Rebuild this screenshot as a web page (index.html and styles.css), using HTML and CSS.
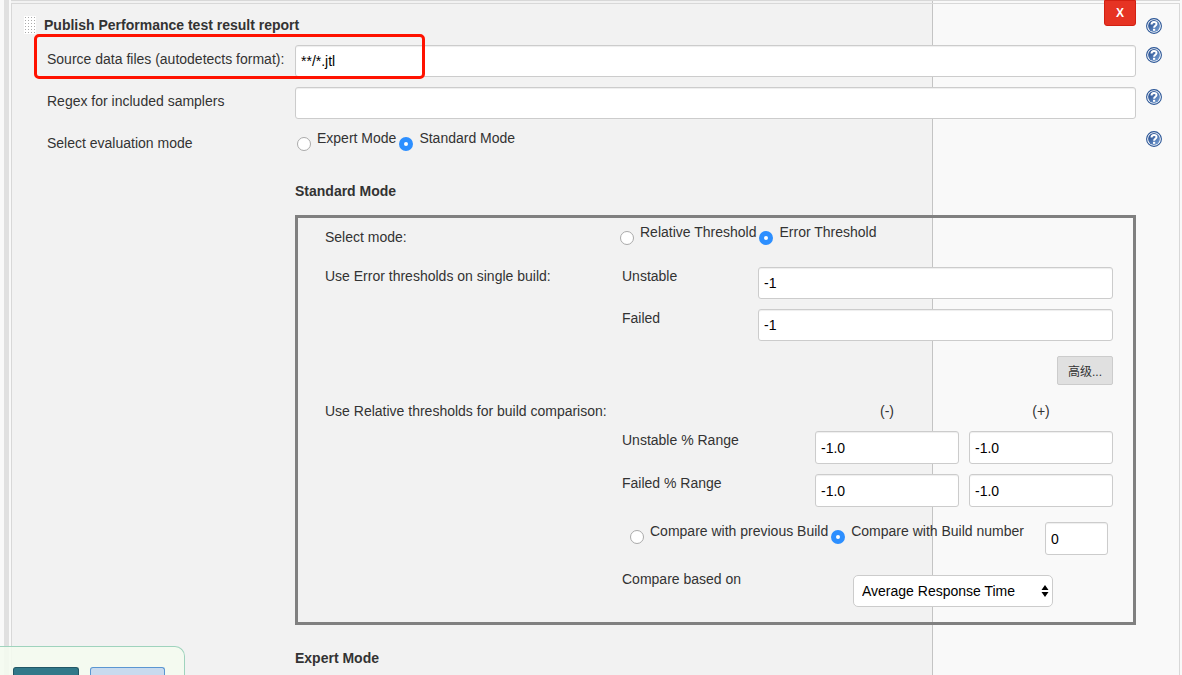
FILE: index.html
```html
<!DOCTYPE html>
<html lang="en">
<head>
  <meta charset="UTF-8">
  <title>Publish Performance test result report</title>
  <link rel="stylesheet" href="styles.css">
</head>
<body>
  <!-- shared help icon -->
  <svg class="defs" width="0" height="0" aria-hidden="true">
    <linearGradient id="help-fill" x1="0" y1="0" x2="1" y2="1">
      <stop offset="0" stop-color="#1d4488"/>
      <stop offset="1" stop-color="#7ba3d6"/>
    </linearGradient>
    <symbol id="help-icon" viewBox="0 0 16 16">
      <circle cx="8" cy="8" r="7.4" fill="#fff" stroke="#2a5596" stroke-width="1.1"/>
      <circle cx="8" cy="8" r="5.9" fill="url(#help-fill)"/>
      <path d="M5.5 6.4C5.5 3.2 10.5 3.2 10.5 6C10.5 7.8 8.1 7.7 8.1 9.8" fill="none" stroke="#fff" stroke-width="2"/>
      <rect x="7" y="10.8" width="2.2" height="2" fill="#fff"/>
    </symbol>
  </svg>

  <div class="page">
    <form class="panel">
      <div class="title-row">
        <span class="handle"></span>
        <h2 class="title">Publish Performance test result report</h2>
        <a class="help" href="#" aria-label="Help"><svg><use href="#help-icon"/></svg></a>
      </div>
      <button type="button" class="delete">X</button>

      <div class="row">
        <label class="name" for="source">Source data files (autodetects format):</label>
        <input type="text" id="source" value="**/*.jtl">
        <a class="help" href="#" aria-label="Help"><svg><use href="#help-icon"/></svg></a>
        <span class="highlight"></span>
      </div>

      <div class="row">
        <label class="name" for="regex">Regex for included samplers</label>
        <input type="text" id="regex">
        <a class="help" href="#" aria-label="Help"><svg><use href="#help-icon"/></svg></a>
      </div>

      <div class="row">
        <span class="name">Select evaluation mode</span>
        <div class="radios">
          <label><input type="radio" name="evaluation">Expert Mode</label>
          <label><input type="radio" name="evaluation" checked>Standard Mode</label>
        </div>
        <a class="help" href="#" aria-label="Help"><svg><use href="#help-icon"/></svg></a>
      </div>

      <div class="section">
        <h3>Standard Mode</h3>
        <div class="box">
          <div class="box-row mode">
            <span class="name">Select mode:</span>
            <div class="radios">
              <label><input type="radio" name="threshold">Relative Threshold</label>
              <label><input type="radio" name="threshold" checked>Error Threshold</label>
            </div>
          </div>

          <div class="box-row">
            <span>Use Error thresholds on single build:</span>
            <div class="fields">
              <div class="single">
                <label for="unstable">Unstable</label>
                <input type="text" id="unstable" value="-1">
              </div>
              <div class="single">
                <label for="failed">Failed</label>
                <input type="text" id="failed" value="-1">
              </div>
            </div>
          </div>

          <div class="actions">
            <button type="button" class="advanced">高级...</button>
          </div>

          <div class="box-row">
            <span>Use Relative thresholds for build comparison:</span>
            <div class="fields">
              <div class="range signs">
                <span></span>
                <span>(-)</span>
                <span>(+)</span>
              </div>
              <div class="range">
                <label for="unstable-neg">Unstable % Range</label>
                <input type="text" id="unstable-neg" value="-1.0">
                <input type="text" aria-label="Unstable % Range (+)" value="-1.0">
              </div>
              <div class="range">
                <label for="failed-neg">Failed % Range</label>
                <input type="text" id="failed-neg" value="-1.0">
                <input type="text" aria-label="Failed % Range (+)" value="-1.0">
              </div>
            </div>
          </div>

          <div class="box-row">
            <span></span>
            <div>
              <div class="compare">
                <div class="radios">
                  <label><input type="radio" name="compare">Compare with previous Build</label>
                  <label><input type="radio" name="compare" checked>Compare with Build number</label>
                </div>
                <input type="text" class="build" aria-label="Build number" value="0">
              </div>
              <div class="based">
                <label for="based-on">Compare based on</label>
                <div class="select">
                  <select id="based-on">
                    <option>Average Response Time</option>
                  </select>
                  <svg width="8" height="14" viewBox="0 0 8 14"><path d="M4 1L7.5 6H.5zM4 13L.5 8H7.5z"/></svg>
                </div>
              </div>
            </div>
          </div>
        </div>

        <h3>Expert Mode</h3>
      </div>
    </form>
  </div>

  <div class="bottom-bar">
    <button type="button" class="save" aria-label="Save"></button>
    <button type="button" class="apply" aria-label="Apply"></button>
  </div>
</body>
</html>
```
FILE: styles.css
```css
* {
  box-sizing: border-box;
}

body {
  margin: 0;
  background: #f9f9f9;
  color: #333;
  font-family: "Liberation Sans", Arial, "Noto Sans CJK SC", sans-serif;
  font-size: 14px;
  line-height: 18px;
}

.defs {
  position: absolute;
}

.page {
  min-height: 100vh;
  margin-left: 4px;
  padding: 0 2px;
  border-left: 5px solid #e0e0e0;
}

/* bottom edge of the block above, then the panel */
.page::before {
  content: "";
  display: block;
  height: 2px;
  border-top: 1px solid #d8d8d8;
  background: linear-gradient(to left, #f9f9f9 247px, #c4c4c4 247px, #c4c4c4 248px, #f2f2f2 248px);
}

.panel {
  position: relative;
  min-height: calc(100vh - 3px);
  padding-top: 12px;
  border: 1px solid #d8d8d8;
  border-bottom: none;
  background: linear-gradient(to left, #f9f9f9 246px, #c4c4c4 246px, #c4c4c4 247px, #f2f2f2 247px);
}

h2,
h3 {
  margin: 0;
  font-size: 14px;
  line-height: 18px;
}

.title-row {
  display: flex;
  gap: 8px;
  margin-bottom: 11px;
  padding: 0 17px 0 12px;
}

.title {
  flex: 1;
}

.handle {
  width: 12px;
  height: 18px;
  background: radial-gradient(circle, #aaa 1px, #fff 1px) 0 0 / 3px 3px;
}

.help {
  height: 16px;
  margin-top: 2px;
}

.help svg {
  display: block;
  width: 16px;
  height: 16px;
}

button {
  font-family: inherit;
  cursor: pointer;
}

.delete {
  position: absolute;
  top: -4px;
  right: 43px;
  width: 32px;
  height: 26px;
  padding: 0;
  border: 1px solid #d22012;
  border-radius: 0 0 3px 3px;
  background: #e63323;
  color: #fff;
  font-size: 12px;
  font-weight: bold;
}

.row {
  position: relative;
  display: grid;
  grid-template-columns: 238px 1fr 16px;
  column-gap: 10px;
  align-items: start;
  min-height: 32px;
  margin-bottom: 10px;
  padding: 0 17px 0 35px;
}

.name {
  padding-top: 5px;
  white-space: nowrap;
}

.highlight {
  position: absolute;
  top: -11px;
  left: 22px;
  width: 391px;
  height: 45px;
  border: 3px solid #ff1200;
  border-radius: 5px;
  pointer-events: none;
}

input[type="text"],
select {
  width: 100%;
  min-width: 0;
  height: 32px;
  padding: 0 5px;
  border: 1px solid #ccc;
  border-radius: 3px;
  background: #fff;
  box-shadow: inset 0 1px 1px rgba(0, 0, 0, 0.07);
  color: #000;
  font-family: inherit;
  font-size: 14px;
}

.radios {
  display: flex;
  gap: 3px;
}

.row .radios {
  padding-left: 2px;
}

.radios label {
  display: flex;
  align-items: flex-start;
  gap: 6px;
  white-space: nowrap;
}

input[type="radio"] {
  appearance: none;
  width: 14px;
  height: 14px;
  margin: 8px 0 0;
  border: 1px solid #aaa;
  border-radius: 50%;
  background: #fff;
}

input[type="radio"]:checked {
  border: 5px solid #2d8fff;
}

.section {
  margin: 0 43px 0 283px;
}

.section h3 {
  margin: 21px 0 15px;
}

.box {
  margin-bottom: 24px;
  padding: 5px 20px 15px 27px;
  border: 3px solid #808080;
}

.box-row {
  display: grid;
  grid-template-columns: 295px 1fr;
}

.mode {
  min-height: 44px;
}

.fields {
  display: grid;
  gap: 10px;
}

.single {
  display: grid;
  grid-template-columns: 138px 1fr;
}

.single label,
.range label,
.based label {
  padding-left: 2px;
}

.actions {
  display: flex;
  justify-content: flex-end;
  margin: 15px 0 17px;
}

.advanced {
  width: 56px;
  height: 29px;
  padding: 0;
  border: 1px solid #ccc;
  border-radius: 2px;
  background: #e0e0e0;
  color: #333;
  font-size: 12px;
}

.range {
  display: grid;
  grid-template-columns: 185px 1fr 1fr;
  gap: 10px;
}

.range input[type="text"],
input[type="text"].build {
  height: 33px;
}

.signs {
  margin-bottom: 1px;
  text-align: center;
}

.compare {
  display: flex;
  justify-content: space-between;
  margin: 15px 0;
  padding: 0 5px 0 10px;
}

input[type="text"].build {
  width: 63px;
}

.based {
  display: grid;
  grid-template-columns: 233px 200px;
}

.select {
  position: relative;
  padding-top: 5px;
}

select {
  display: block;
  appearance: none;
  padding: 0 8px;
  border-radius: 5px;
  box-shadow: none;
}

.select svg {
  position: absolute;
  top: 14px;
  right: 4px;
  pointer-events: none;
}

/* sticky save / apply bar */
.bottom-bar {
  position: fixed;
  bottom: 0;
  left: 0;
  display: flex;
  gap: 11px;
  height: 29px;
  padding: 20px 19px 0 13px;
  border: 1px solid #9fd3bd;
  border-width: 1px 1px 0 0;
  border-radius: 0 10px 0 0;
  background: rgba(244, 251, 239, 0.9);
}

.save,
.apply {
  height: 8px;
  padding: 0;
  border: 1px solid #225766;
  border-bottom: none;
  border-radius: 3px 3px 0 0;
}

.save {
  width: 66px;
  background: #317889;
}

.apply {
  width: 75px;
  border-color: #5a96d2;
  background: #c8daee;
}
```
